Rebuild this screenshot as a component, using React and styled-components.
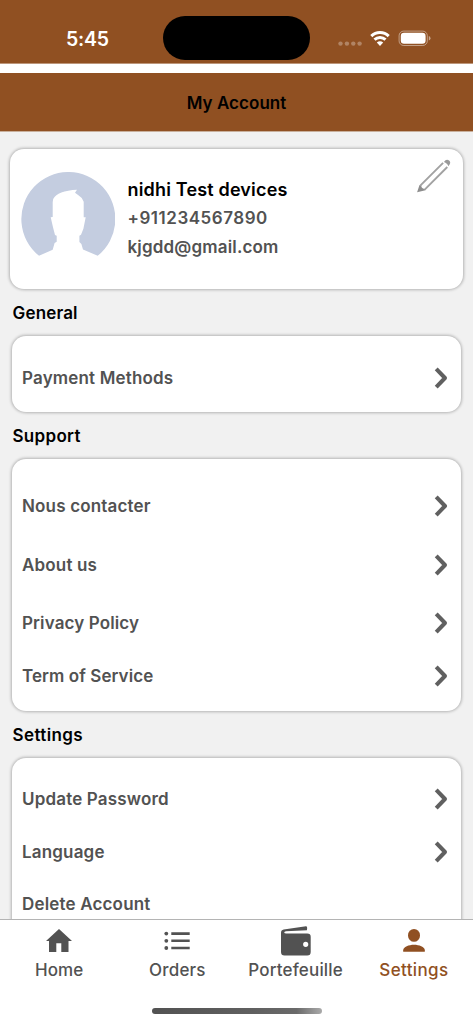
import styled, { createGlobalStyle } from "styled-components";

const Brown = "#905022";
const Gray = "#525252";
const PageGray = "#f1f1f1";

const GlobalStyle = createGlobalStyle`
  * {
    box-sizing: border-box;
  }
  body {
    margin: 0;
    background: #fff;
    font-family: Inter, "Liberation Sans", sans-serif;
  }
`;

const Screen = styled.div`
  width: 473px;
  height: 1024px;
  display: flex;
  flex-direction: column;
  overflow: hidden;
  background: #fff;
`;

const Text = styled.span`
  display: block;
  white-space: nowrap;
  color: ${(props) => props.$color || Gray};
  font-size: ${(props) => props.$size || 17}px;
  font-weight: ${(props) => props.$weight || 580};
  letter-spacing: ${(props) => props.$spacing ?? 0.17}px;
  line-height: 24px;
`;

const StatusBar = styled.div`
  flex: none;
  height: 64px;
  padding: 16px 42px 0 66px;
  display: flex;
  align-items: flex-start;
  background: ${Brown};
  border-bottom: 1px solid #bd967a;
`;
const Clock = styled(Text)`
  width: 97px;
  line-height: 46px;
`;
const Island = styled.div`
  width: 147px;
  height: 44px;
  border-radius: 22px;
  background: #000;
`;
const StatusIcons = styled.svg`
  margin: 13px 0 0 auto;
  width: 94px;
  height: 18px;
`;

const Header = styled.header`
  flex: none;
  height: 59px;
  margin-top: 9px;
  padding-top: 1px;
  display: flex;
  align-items: center;
  justify-content: center;
  background: ${Brown};
  border-bottom: 1px solid #c9b09c;
`;

const Content = styled.main`
  flex: 1;
  min-height: 0;
  overflow: hidden;
  padding: 17px 12px 0;
  background: ${PageGray};
`;

const Card = styled.section`
  padding: ${(props) => props.$padding || "0"};
  height: ${(props) => props.$height}px;
  border-radius: 14px;
  background: #fff;
  box-shadow: 0 0 3px 1px rgba(0, 0, 0, 0.26);
`;
const ProfileCard = styled(Card)`
  margin: 0 -2px;
  padding: 23px 12px 0 11px;
  display: flex;
  align-items: flex-start;
`;
const Avatar = styled.svg`
  width: 94px;
  height: 94px;
`;
const ProfileInfo = styled.div`
  flex: 1;
  padding: 5.5px 0 0 12.5px;
  display: flex;
  flex-direction: column;
  gap: 4.5px;
`;
const Pencil = styled.svg`
  width: 35px;
  height: 35px;
  margin-top: -14px;
`;

const SectionTitle = styled.h2`
  margin: 0;
  height: 47px;
  padding-left: 0.5px;
  display: flex;
  align-items: center;
`;

const Row = styled.div`
  height: ${(props) => props.$height}px;
  padding: 0 13px 0 10px;
  display: flex;
  align-items: center;
  justify-content: space-between;
`;

const TabBar = styled.nav`
  flex: none;
  height: 105px;
  border-top: 1px solid #b4b4b4;
  display: flex;
  flex-direction: column;
  align-items: center;
  background: #fff;
`;
const Tabs = styled.div`
  width: 100%;
  height: 88px;
  display: grid;
  grid-template-columns: repeat(4, 1fr);
`;
const Tab = styled.div`
  padding-top: 4px;
  display: flex;
  flex-direction: column;
  align-items: center;
  color: ${(props) => (props.$active ? Brown : Gray)};
  svg {
    width: 32px;
    height: 32px;
    margin-bottom: 2px;
  }
`;
const HomeIndicator = styled.div`
  width: 170px;
  height: 6px;
  border-radius: 3px;
  background: linear-gradient(90deg, #525252 0, #606060 60%, #6a6a6a 85%, #aaa);
`;

const Chevron = () => (
  <svg width="15" height="24" viewBox="0 0 15 24">
    <path
      d="M3.2 2.8 12 12 3.2 21.2"
      fill="none"
      stroke="#606060"
      strokeWidth="4"
      strokeLinejoin="round"
    />
  </svg>
);

const HomeIcon = () => (
  <svg viewBox="0 0 32 32" fill="currentColor">
    <path d="M16 5 29 17h-3.5v11h-7.2v-8.8h-5V28H6V17H3z" />
  </svg>
);
const OrdersIcon = () => (
  <svg viewBox="0 0 32 32" fill="currentColor">
    <circle cx="5.3" cy="9.6" r="1.9" />
    <circle cx="5.3" cy="16.8" r="1.9" />
    <circle cx="5.3" cy="24" r="1.9" />
    <path d="M10.3 8.3h18.4v2.6H10.3zM10.3 15.5h18.4v2.6H10.3zM10.3 22.7h18.4v2.6H10.3z" />
  </svg>
);
const WalletIcon = () => (
  <svg viewBox="0 0 32 32" fill="currentColor">
    <path
      fillRule="evenodd"
      d="M26 2.3 3.7 5.6Q1 6.1 1 8.8V28q0 3.5 3.5 3.5h22.7q3.5 0 3.5-3.5V12.7q0-3.3-3.5-3.3H6.2Q4.2 9.3 4.2 8.4q0-.9 1.8-1.2l20.9-1Q27.7 2.4 26 2.3ZM25.7 17.7a2.6 2.6 0 1 1 0 5.2 2.6 2.6 0 0 1 0-5.2Z"
    />
  </svg>
);
const PersonIcon = () => (
  <svg viewBox="0 0 32 32" fill="currentColor">
    <ellipse cx="16" cy="11.4" rx="6" ry="6.4" />
    <path d="M5.2 27.7v-1.5C5.2 23 11 20.8 16 20.8s10.8 2.2 10.8 5.4v1.5z" />
  </svg>
);

const sections = [
  {
    title: "General",
    height: 76,
    padding: "12px 0 0",
    rows: [{ label: "Payment Methods", height: 59 }],
  },
  {
    title: "Support",
    height: 252,
    padding: "18px 0 0",
    spacing: 0.3,
    rows: [
      { label: "Nous contacter", height: 58 },
      { label: "About us", height: 59 },
      { label: "Privacy Policy", height: 58, spacing: 0.12 },
      { label: "Term of Service", height: 48, spacing: 0.07 },
    ],
  },
  {
    title: "Settings",
    height: 220,
    padding: "14.5px 0 0",
    spacing: 0.4,
    rows: [
      { label: "Update Password", height: 53 },
      { label: "Language", height: 53 },
      { label: "Delete Account", height: 51, plain: true },
    ],
  },
];

const tabs = [
  { label: "Home", Icon: HomeIcon, spacing: 0.1 },
  { label: "Orders", Icon: OrdersIcon },
  { label: "Portefeuille", Icon: WalletIcon },
  { label: "Settings", Icon: PersonIcon, active: true, spacing: 0.35 },
];

function App() {
  return (
    <Screen>
      <GlobalStyle />
      <StatusBar>
        <Clock $color="#fff" $size={19.5} $spacing={-0.2}>
          5:45
        </Clock>
        <Island />
        <StatusIcons viewBox="337.5 29 94 18">
          <g fill="#fff" fillOpacity="0.3">
            <circle cx="341" cy="43.6" r="2.2" />
            <circle cx="347.4" cy="43.6" r="2.2" />
            <circle cx="353.8" cy="43.6" r="2.2" />
            <circle cx="360.1" cy="43.6" r="2.2" />
          </g>
          <g fill="none" stroke="#fff" strokeWidth="3">
            <path d="M371.8 36.1a12.4 12.4 0 0 1 17.4 0" />
            <path d="M375 39.6a8 8 0 0 1 11 0" />
          </g>
          <path d="M377.3 42.6a4.8 4.8 0 0 1 6.4 0l-3.2 3.3z" fill="#fff" />
          <rect
            x="399.6"
            y="31.1"
            width="28.2"
            height="14.4"
            rx="4.6"
            fill="none"
            stroke="#fff"
            strokeOpacity="0.45"
          />
          <rect x="401.3" y="32.8" width="24.8" height="11" rx="3.2" fill="#fff" />
          <path d="M429.3 36v4.6q1.7-.6 1.7-2.3t-1.7-2.3z" fill="#fff" fillOpacity="0.5" />
        </StatusIcons>
      </StatusBar>
      <Header>
        <Text $color="#000" $spacing={0.05}>
          My Account
        </Text>
      </Header>
      <Content>
        <ProfileCard $height={140}>
          <Avatar viewBox="21.3 32 94 94">
            <path
              fill="#c4cde0"
              d="M39.3 115.7A47 47 0 1 1 98 115.7L83.3 109.5 81.7 104 79.7 102V95.7L81.3 94.7 83.7 88.7 86 77.3H84V61.7Q82 57 78.7 55.3L75.3 52.8 77.3 49.7Q58 50.5 53.5 59L53 62V77L51 77.3 53.3 87.3 55.3 95 57 95.7V101.7L54.9 103 53 109.7Z"
            />
          </Avatar>
          <ProfileInfo>
            <Text $color="#000" $size={18}>
              nidhi Test devices
            </Text>
            <Text $spacing={0.52}>+911234567890</Text>
            <Text>kjgdd@gmail.com</Text>
          </ProfileInfo>
          <Pencil viewBox="123.5 18 35 35">
            <path
              d="M150.6 22.8 128 45.4M154.8 27 132.2 49.6"
              fill="none"
              stroke="#a2a2a2"
              strokeWidth="1.9"
            />
            <path d="M124.6 52.2 127 45 128.8 45.6Q128.6 48.6 132 49L133 50.3Z" fill="#8e8e8e" />
            <path d="M151.4 21.9Q154 18.2 156.6 20.6T155.8 26.2Q155 23 151.4 21.9Z" fill="#999" />
          </Pencil>
        </ProfileCard>
        {sections.map((section) => (
          <div key={section.title}>
            <SectionTitle>
              <Text $color="#000" $spacing={section.spacing}>
                {section.title}
              </Text>
            </SectionTitle>
            <Card $height={section.height} $padding={section.padding}>
              {section.rows.map((row) => (
                <Row key={row.label} $height={row.height}>
                  <Text $spacing={row.spacing}>{row.label}</Text>
                  {!row.plain && <Chevron />}
                </Row>
              ))}
            </Card>
          </div>
        ))}
      </Content>
      <TabBar>
        <Tabs>
          {tabs.map(({ label, Icon, active, spacing }) => (
            <Tab key={label} $active={active}>
              <Icon />
              <Text $color="inherit" $weight={500} $spacing={spacing}>
                {label}
              </Text>
            </Tab>
          ))}
        </Tabs>
        <HomeIndicator />
      </TabBar>
    </Screen>
  );
}
export default App;
